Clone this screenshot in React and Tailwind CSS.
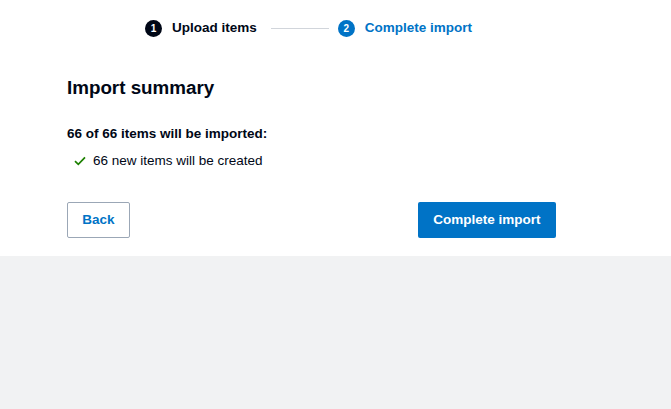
export default function App() {
  return (
    <div className="min-h-[409px] w-[671px] bg-[#f1f2f3] font-['Liberation_Sans',Arial,sans-serif] text-[#000716]">
      <div className="bg-white h-[256px] pl-[67px] pr-[115px]">
        {/* STEPPER */}
        <div className="flex items-center h-[56px] pt-px pl-[78px]">
          <span className="flex items-center justify-center w-[17px] h-[17px] rounded-full bg-[#000716] text-white text-[10px] font-bold">
            1
          </span>
          <span className="ml-[10px] text-[13.5px] font-bold">Upload items</span>
          <span className="ml-[14px] w-[58px] h-px bg-[#d1d5db]" />
          <span className="ml-[9px] flex items-center justify-center w-[17px] h-[17px] rounded-full bg-[#0073c6] text-white text-[10px] font-bold">
            2
          </span>
          <span className="ml-[10px] text-[13.5px] font-bold text-[#0073c6]">Complete import</span>
        </div>

        {/* SUMMARY */}
        <h1 className="mt-[19px] text-[18.8px] leading-[26px] font-bold">Import summary</h1>
        <p className="mt-[24px] text-[13.5px] font-bold leading-[18px]">66 of 66 items will be imported:</p>
        <div className="mt-[9px] flex items-center text-[13.5px] leading-[18px]">
          <svg className="ml-[7px]" width="12" height="10" viewBox="0 0 12 10" fill="none">
            <path d="M1 5.2 L4.3 8.4 L11 1.4" stroke="#1d8102" strokeWidth="1.7" />
          </svg>
          <span className="ml-[7px]">66 new items will be created</span>
        </div>

        {/* ACTIONS */}
        <div className="mt-[32px] flex justify-between">
          <button className="w-[63px] h-[36px] border border-[#9ba7b6] rounded-[2px] text-[13.5px] font-bold text-[#0073c6] bg-white">
            Back
          </button>
          <button className="w-[138px] h-[36px] rounded-[2px] bg-[#0073c6] text-white text-[13.5px] font-bold">
            Complete import
          </button>
        </div>
      </div>
    </div>
  );
}
